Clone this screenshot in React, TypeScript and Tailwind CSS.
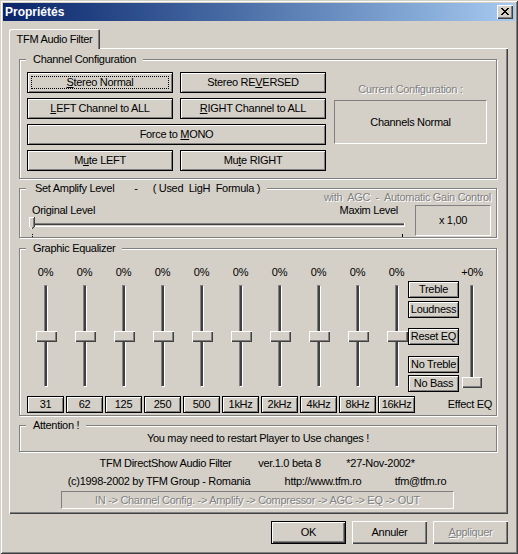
import React from "react";

const raised =
  "bg-[#d4d0c8] shadow-[inset_1px_1px_0_#fff,inset_-1px_-1px_0_#404040,inset_-2px_-2px_0_#808080]";
const flatBtn =
  "bg-[#d4d0c8] border border-black shadow-[inset_1px_1px_0_#fff,inset_-1px_-1px_0_#808080]";
const sunken =
  "border border-t-[#808080] border-l-[#808080] border-r-white border-b-white";
const disabled = "text-[#808080] [text-shadow:1px_1px_0_#fff]";
const track =
  "border border-t-[#808080] border-l-[#808080] border-r-white border-b-white bg-[#404040]";

function Btn({
  children,
  className = "",
  focus = false,
}: {
  children: React.ReactNode;
  className?: string;
  focus?: boolean;
}) {
  return (
    <div className={`relative flex items-center justify-center ${flatBtn} ${className}`}>
      <span className="whitespace-pre">{children}</span>
      {focus && (
        <span className="absolute inset-[3px] border border-dotted border-black" />
      )}
    </div>
  );
}

function Group({
  title,
  className = "",
  children,
}: {
  title: React.ReactNode;
  className?: string;
  children?: React.ReactNode;
}) {
  return (
    <div
      className={`relative ml-[10px] w-[478px] border border-[#808080] shadow-[inset_1px_1px_0_#fff,1px_1px_0_#fff] ${className}`}
    >
      <div className="absolute left-[6px] top-[-7px] bg-[#d4d0c8] px-[7px] leading-[13px] whitespace-pre">
        {title}
      </div>
      {children}
    </div>
  );
}

const freqs = ["31", "62", "125", "250", "500", "1kHz", "2kHz", "4kHz", "8kHz", "16kHz"];

export default function App() {
  return (
    <div className="w-[518px] h-[554px] bg-[#d4d0c8] p-[3px] font-['Liberation_Sans',Arial,sans-serif] text-[11px] leading-[13px] tracking-[-0.3px] text-black shadow-[inset_1px_1px_0_#d4d0c8,inset_-1px_-1px_0_#404040,inset_2px_2px_0_#fff,inset_-2px_-2px_0_#808080]">
      {/* Title bar */}
      <div className="h-[18px] flex items-center bg-linear-to-r from-[#0a246a] to-[#a6caf0]">
        <span className="pl-[2px] text-white font-bold text-[12px] tracking-normal">Propriétés</span>
        <div className={`ml-auto mr-[2px] w-[16px] h-[14px] flex items-start ${raised}`}>
          <svg width="8" height="7" className="ml-[4px] mt-[3px]" shapeRendering="crispEdges">
            <rect x="0" y="0" width="2" height="1" fill="#000" />
            <rect x="6" y="0" width="2" height="1" fill="#000" />
            <rect x="1" y="1" width="2" height="1" fill="#000" />
            <rect x="5" y="1" width="2" height="1" fill="#000" />
            <rect x="2" y="2" width="4" height="1" fill="#000" />
            <rect x="3" y="3" width="2" height="1" fill="#000" />
            <rect x="2" y="4" width="4" height="1" fill="#000" />
            <rect x="1" y="5" width="2" height="1" fill="#000" />
            <rect x="5" y="5" width="2" height="1" fill="#000" />
            <rect x="0" y="6" width="2" height="1" fill="#000" />
            <rect x="6" y="6" width="2" height="1" fill="#000" />
          </svg>
        </div>
      </div>

      {/* Body */}
      <div className="pl-[6px] pr-[7px] pt-[8px]">
        {/* Tab */}
        <div className="relative z-10 mb-[-1px] w-[91px] h-[20px] flex items-center justify-center bg-[#d4d0c8] rounded-t-[2px] shadow-[inset_1px_1px_0_#fff,inset_-1px_0_0_#404040,inset_-2px_0_0_#808080]">
          TFM Audio Filter
        </div>

        {/* Panel */}
        <div className="w-[499px] h-[466px] flex flex-col items-start shadow-[inset_1px_1px_0_#fff,inset_-1px_-1px_0_#404040,inset_-2px_-2px_0_#808080]">
          {/* Channel Configuration */}
          <Group title="Channel Configuration" className="mt-[11px] h-[120px] flex pl-[7px] pt-[12px]">
            <div className="grid grid-cols-[146px_146px] auto-rows-[21px] gap-x-[7px] gap-y-[5px]">
              <Btn focus>
                <u>S</u>tereo Normal
              </Btn>
              <Btn>
                Stereo RE<u>V</u>ERSED
              </Btn>
              <Btn>
                <u>L</u>EFT Channel to ALL
              </Btn>
              <Btn>
                <u>R</u>IGHT Channel to ALL
              </Btn>
              <Btn className="col-span-2">
                Force to <u>M</u>ONO
              </Btn>
              <Btn>
                M<u>u</u>te LEFT
              </Btn>
              <Btn>
                Mu<u>t</u>e RIGHT
              </Btn>
            </div>
            <div className="ml-[8px] w-[153px] flex flex-col">
              <div className={`h-[28px] pt-[6px] flex items-center justify-center ${disabled}`}>
                Current Configuration :
              </div>
              <div className={`h-[44px] flex items-center justify-center ${sunken}`}>Channels Normal</div>
            </div>
          </Group>

          {/* Amplify */}
          <Group
            title={
              <>
                <span className="pl-[2px]">Set Amplify Level</span>
                <span className="ml-[20px]">-</span>
                <span className="ml-[15px]">( Used  LigH  Formula )</span>
              </>
            }
            className="mt-[9px] h-[50px]"
          >
            <div className={`h-[15px] pt-[2px] pr-[5px] text-right whitespace-pre ${disabled}`}>
              with  AGC  -  Automatic Gain Control
            </div>
            <div className="flex">
              <div className="ml-[9px] w-[378px] flex flex-col">
                <div className="h-[13px] flex justify-between pl-[3px] pr-[9px]">
                  <span>Original Level</span>
                  <span>Maxim Level</span>
                </div>
                <svg width="378" height="21" shapeRendering="crispEdges">
                  <rect x="4" y="6" width="372" height="1" fill="#808080" />
                  <rect x="4" y="7" width="372" height="1" fill="#404040" />
                  <rect x="4" y="8" width="372" height="1" fill="#d4d0c8" />
                  <rect x="4" y="9" width="372" height="1" fill="#ffffff" />
                  <rect x="4" y="6" width="1" height="3" fill="#808080" />
                  <rect x="375" y="6" width="1" height="4" fill="#ffffff" />
                  <polygon points="0,0 6,0 6,10 3,13 0,10" fill="#d4d0c8" />
                  <rect x="0" y="0" width="5" height="1" fill="#ffffff" />
                  <rect x="0" y="0" width="1" height="10" fill="#ffffff" />
                  <rect x="1" y="10" width="1" height="1" fill="#ffffff" />
                  <rect x="2" y="11" width="1" height="1" fill="#ffffff" />
                  <rect x="5" y="0" width="1" height="10" fill="#404040" />
                  <rect x="4" y="1" width="1" height="9" fill="#808080" />
                  <rect x="4" y="10" width="1" height="1" fill="#404040" />
                  <rect x="3" y="11" width="1" height="1" fill="#404040" />
                  <rect x="3" y="10" width="1" height="1" fill="#808080" />
                  <rect x="3" y="17" width="1" height="1" fill="#000" />
                  <rect x="3" y="19" width="1" height="1" fill="#000" />
                  <rect x="373" y="17" width="1" height="3" fill="#000" />
                </svg>
              </div>
              <div className={`ml-[8px] mt-[1px] w-[76px] h-[31px] flex items-center justify-center ${sunken}`}>
                x 1,00
              </div>
            </div>
          </Group>

          {/* Graphic Equalizer */}
          <Group title="Graphic Equalizer" className="mt-[10px] h-[168px] flex pl-[7px] pt-[17px] gap-x-[2px]">
            {freqs.map((f) => (
              <div key={f} className="w-[37px] flex flex-col">
                <div className="h-[13px] text-center">0%</div>
                <div className="relative h-[112px]">
                  <div className={`ml-[17px] mt-[6px] w-[4px] h-[102px] ${track}`} />
                  <div className={`absolute left-[9px] top-[52px] w-[21px] h-[11px] ${raised}`} />
                </div>
                <div className={`mt-[5px] h-[17px] flex items-center justify-center ${flatBtn}`}>{f}</div>
              </div>
            ))}
            <div className="ml-[-9px] flex flex-col">
              <div className="flex">
                <div className="w-[51px] flex flex-col">
                  <Btn className="mt-[15px] h-[17px]">Treble</Btn>
                  <Btn className="mt-[3px] h-[17px]">Loudness</Btn>
                  <Btn className="mt-[10px] h-[17px]">Reset EQ</Btn>
                  <Btn className="mt-[11px] h-[17px]">No Treble</Btn>
                  <Btn className="mt-[2px] h-[17px]">No Bass</Btn>
                </div>
                <div className="ml-[2px] w-[22px] flex flex-col">
                  <div className="h-[13px] text-center whitespace-nowrap">+0%</div>
                  <div className="relative h-[112px]">
                    <div className={`ml-[9px] mt-[6px] w-[4px] h-[102px] ${track}`} />
                    <div className={`absolute left-[1px] top-[98px] w-[20px] h-[11px] ${raised}`} />
                  </div>
                </div>
              </div>
              <div className="mt-[6px] self-end mr-[-9px] h-[13px] whitespace-nowrap">Effect EQ</div>
            </div>
          </Group>

          {/* Attention */}
          <Group title="Attention !" className="mt-[9px] h-[27px] flex items-center justify-center">
            You may need to restart Player to Use changes !
          </Group>

          {/* Footer */}
          <div className="mt-[4px] h-[14px] leading-[14px] flex ml-[86px]">
            <span className="w-[141px] text-center whitespace-nowrap">TFM DirectShow Audio Filter</span>
            <span className="w-[107px] text-center whitespace-nowrap">ver.1.0 beta 8</span>
            <span className="w-[75px] text-center whitespace-nowrap">*27-Nov-2002*</span>
          </div>
          <div className="mt-[4px] h-[14px] leading-[14px] flex ml-[48px]">
            <span className="w-[204px] text-center whitespace-nowrap">(c)1998-2002 by TFM Group - Romania</span>
            <span className="w-[124px] text-center whitespace-nowrap">http://www.tfm.ro</span>
            <span className="w-[71px] text-center whitespace-nowrap">tfm@tfm.ro</span>
          </div>
          <div
            className={`mt-[3px] ml-[52px] w-[393px] h-[18px] flex items-center justify-center whitespace-nowrap ${sunken} ${disabled}`}
          >
            IN -&gt; Channel Config. -&gt; Amplify -&gt; Compressor -&gt; AGC -&gt; EQ -&gt; OUT
          </div>
        </div>

        {/* Dialog buttons */}
        <div className="mt-[7px] flex justify-end gap-[6px]">
          <div className="w-[75px] h-[23px] flex items-center justify-center bg-[#d4d0c8] border border-black shadow-[inset_1px_1px_0_#fff,inset_-1px_-1px_0_#404040,inset_-2px_-2px_0_#808080]">
            OK
          </div>
          <div className={`w-[75px] h-[23px] flex items-center justify-center ${raised}`}>Annuler</div>
          <div className={`w-[75px] h-[23px] flex items-center justify-center ${raised}`}>
            <span className={disabled}>
              <u>A</u>ppliquer
            </span>
          </div>
        </div>
      </div>
    </div>
  );
}
